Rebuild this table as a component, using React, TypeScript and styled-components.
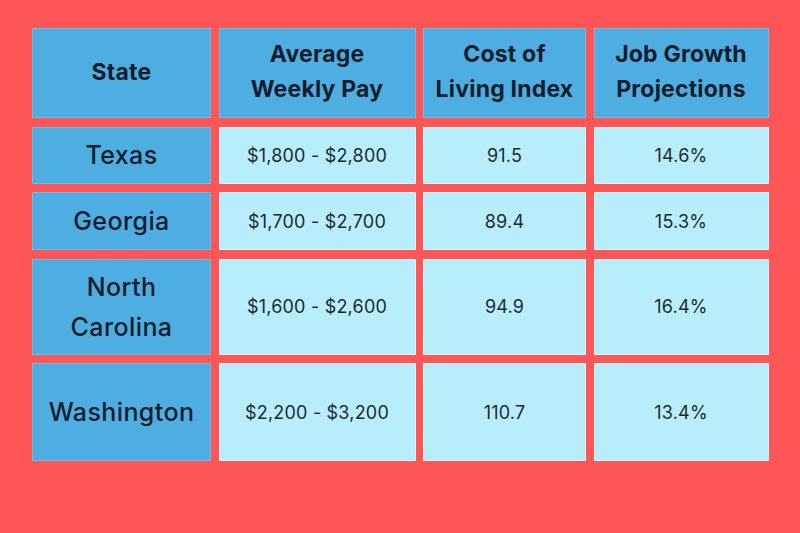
import styled, { createGlobalStyle } from 'styled-components';

type Row = {
  state: string[];
  pay: string;
  cost: string;
  growth: string;
  height: number;
};

const headers = [['State'], ['Average', 'Weekly Pay'], ['Cost of', 'Living Index'], ['Job Growth', 'Projections']];

const rows: Row[] = [
  { state: ['Texas'], pay: '$1,800 - $2,800', cost: '91.5', growth: '14.6%', height: 57 },
  { state: ['Georgia'], pay: '$1,700 - $2,700', cost: '89.4', growth: '15.3%', height: 58 },
  { state: ['North', 'Carolina'], pay: '$1,600 - $2,600', cost: '94.9', growth: '16.4%', height: 96 },
  { state: ['Washington'], pay: '$2,200 - $3,200', cost: '110.7', growth: '13.4%', height: 98 },
];

const App = () => {
  return (
    <>
      <GlobalStyle />
      <Page>
        <Table $rows={[90, ...rows.map(r => r.height)]}>
          {headers.map((lines, i) => (
            <HeadCell key={i}>
              {lines.map(l => <span key={l}>{l}</span>)}
            </HeadCell>
          ))}
          {rows.map(row => (
            <RowGroup key={row.state.join(' ')}>
              <StateCell>
                {row.state.map(l => <span key={l}>{l}</span>)}
              </StateCell>
              <DataCell>{row.pay}</DataCell>
              <DataCell>{row.cost}</DataCell>
              <DataCell>{row.growth}</DataCell>
            </RowGroup>
          ))}
        </Table>
      </Page>
    </>
  );
};

export default App;

const GlobalStyle = createGlobalStyle`
  html, body {
    margin: 0;
    padding: 0;
    background: #fe5656;
  }
  body {
    font-family: Inter, "Liberation Sans", sans-serif;
    color: #111d2c;
  }
`;

const Page = styled.div`
  width: 800px;
  height: 533px;
  background: #fe5656;
  padding: 28px 0 0 32px;
  box-sizing: border-box;
`;

const Table = styled.div<{ $rows: number[] }>`
  display: grid;
  grid-template-columns: 179px 197px 163px 175px;
  grid-template-rows: ${p => p.$rows.map(h => `${h}px`).join(' ')};
  column-gap: 7.5px;
  row-gap: 8.5px;
`;

const RowGroup = styled.div`
  display: contents;
`;

const Cell = styled.div`
  display: flex;
  flex-direction: column;
  align-items: center;
  justify-content: center;
  text-align: center;
  box-sizing: border-box;
`;

const HeadCell = styled(Cell)`
  background: #4eaee2;
  border: 1px solid #6cbce8;
  font-size: 23px;
  font-weight: 700;
  letter-spacing: 0.2px;
  line-height: 35px;
  padding-bottom: 2px;
`;

const StateCell = styled(Cell)`
  background: #4eaee2;
  border: 1px solid #6cbce8;
  font-size: 25px;
  font-weight: 500;
  letter-spacing: 0.4px;
  line-height: 40px;
`;

const DataCell = styled(Cell)`
  background: #b8eefb;
  border: 1px solid #d7f4fb;
  font-size: 18px;
  font-weight: 400;
  letter-spacing: 0.2px;
  color: #1d2a33;
`;
